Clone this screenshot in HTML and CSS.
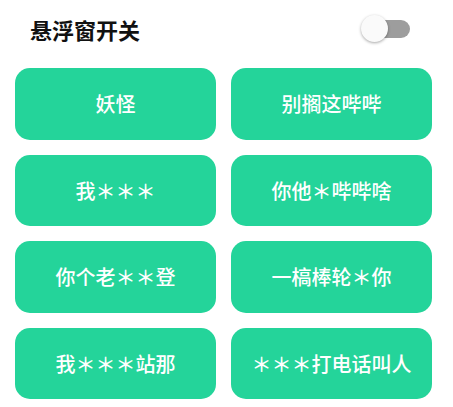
FILE: index.html
```html
<!DOCTYPE html>
<html lang="zh">
<head>
<meta charset="utf-8">
<link rel="stylesheet" href="styles.css">
</head>
<body>
<div class="page">
  <div class="header">
    <span class="title">悬浮窗开关</span>
    <div class="switch">
      <div class="track"></div>
      <div class="thumb"></div>
    </div>
  </div>
  <div class="grid">
    <div class="btn">妖怪</div>
    <div class="btn">别搁这哔哔</div>
    <div class="btn">我＊＊＊</div>
    <div class="btn">你他＊哔哔啥</div>
    <div class="btn">你个老＊＊登</div>
    <div class="btn">一槁棒轮＊你</div>
    <div class="btn">我＊＊＊站那</div>
    <div class="btn">＊＊＊打电话叫人</div>
  </div>
</div>
</body>
</html>
```
FILE: styles.css
```css
html, body {
  margin: 0;
  padding: 0;
  background: #ffffff;
}
.page {
  width: 453px;
  height: 407px;
  font-family: "Noto Sans CJK SC", "Noto Sans", sans-serif;
}
.header {
  display: flex;
  align-items: center;
  justify-content: space-between;
  height: 54px;
  padding: 4px 43px 0 30px;
  box-sizing: border-box;
}
.title {
  font-size: 22px;
  font-weight: 700;
  color: #111111;
  line-height: 1;
}
.switch {
  position: relative;
  width: 50px;
  height: 30px;
}
.track {
  position: absolute;
  right: 0;
  top: 6px;
  width: 46px;
  height: 18px;
  border-radius: 9px;
  background: #9d9d9d;
}
.thumb {
  position: absolute;
  left: 1px;
  top: 1px;
  width: 27px;
  height: 27px;
  border-radius: 50%;
  background: #fafafa;
  box-shadow: 0 1px 3px rgba(0, 0, 0, 0.35);
}
.grid {
  display: grid;
  grid-template-columns: 201px 201px;
  grid-auto-rows: 71.5px;
  column-gap: 15px;
  row-gap: 15px;
  padding: 14px 0 0 15px;
}
.btn {
  background: #24d49a;
  border-radius: 15px;
  display: flex;
  align-items: center;
  justify-content: center;
  color: #ffffff;
  font-size: 20px;
  font-weight: 500;
}
```
